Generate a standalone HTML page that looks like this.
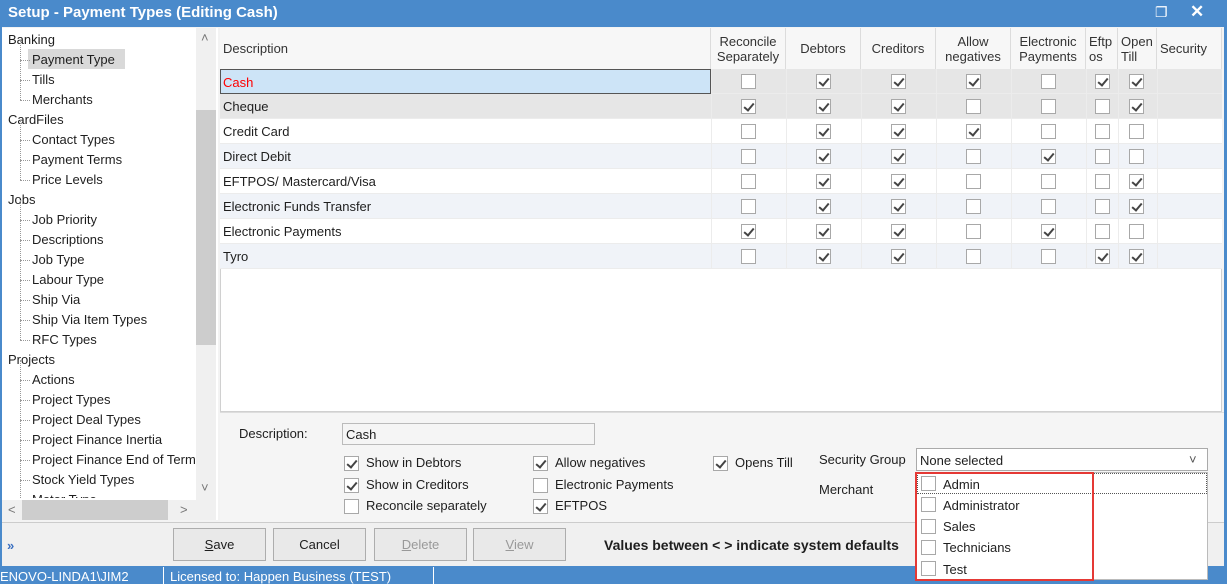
<!DOCTYPE html>
<html><head><meta charset="utf-8"><style>
*{box-sizing:border-box;margin:0;padding:0}
body{width:1227px;height:584px;overflow:hidden;background:#4a8acb;font-family:"Liberation Sans",sans-serif;font-size:13px;color:#1e1e1e;position:relative}
.a{position:absolute}
.t{position:absolute;white-space:nowrap}
.cb{position:absolute;width:15px;height:15px;border:1px solid #a8a8a8;background:#fff}
.cb.on::after{content:"";position:absolute;left:4px;top:1px;width:4px;height:8px;border:solid #444;border-width:0 2px 2px 0;transform:rotate(40deg)}
.hd{position:absolute;top:28px;height:41px;border-right:1px solid #dcdcdc;background:#f7f7f7;text-align:center;font-size:13px;line-height:15px;color:#333;display:flex;align-items:center;justify-content:center}
.row{position:absolute;left:220px;width:1002px;height:25px;border-bottom:1px solid #ececec}
.row span{position:absolute;left:3px;top:5px}
.vl{position:absolute;top:69px;height:200px;width:1px;background:#ececec}
.tr{position:absolute;left:0;font-size:13px;white-space:nowrap}
.btn{position:absolute;top:528px;height:33px;border:1px solid #adadad;background:#e9e9e9;text-align:center;line-height:31px;font-size:13px}
</style></head><body>
<div class="t" style="left:8px;top:4px;color:#fff;font-weight:bold;font-size:15px">Setup - Payment Types (Editing Cash)</div>
<div class="t" style="left:1155px;top:4px;color:#fff;font-size:14px">&#x2750;</div>
<div class="t" style="left:1190px;top:2px;color:#fff;font-size:17px;font-weight:bold">✕</div>
<div class="a" style="left:2px;top:27px;width:1222px;height:539px;background:#f3f3f3"></div>
<!-- tree -->
<div class="a" style="left:2px;top:28px;width:216px;height:492px;background:#fff;overflow:hidden">
<div class="a" style="left:194px;top:0;width:20px;height:472px;background:#f0f0f0"></div>
<div class="a" style="left:194px;top:82px;width:20px;height:235px;background:#cdcdcd"></div>
<div class="t" style="left:199px;top:2px;color:#777">&#x2c4;</div>
<div class="t" style="left:199px;top:452px;color:#777">&#x2c5;</div>
<div class="a" style="left:0;top:472px;width:214px;height:20px;background:#f0f0f0"></div>
<div class="a" style="left:20px;top:472px;width:146px;height:20px;background:#cdcdcd"></div>
<div class="t" style="left:6px;top:474px;color:#777">&lt;</div>
<div class="t" style="left:178px;top:474px;color:#777">&gt;</div>
<div class="a" style="left:26px;top:21px;width:97px;height:20px;background:#d9d9d9"></div>
<div style="position:absolute;left:6px;top:2px;line-height:20px;width:188px;height:468px;overflow:hidden" id="tree"></div>
</div>
<!-- grid -->
<div class="a" style="left:220px;top:28px;width:1002px;height:384px;background:#fff;border:1px solid #d0d0d0"></div>
<div class="hd" style="left:220px;width:491px;justify-content:flex-start;padding-left:3px">Description</div>
<div class="hd" style="left:711px;width:75px">Reconcile<br>Separately</div>
<div class="hd" style="left:786px;width:75px">Debtors</div>
<div class="hd" style="left:861px;width:75px">Creditors</div>
<div class="hd" style="left:936px;width:75px">Allow<br>negatives</div>
<div class="hd" style="left:1011px;width:75px">Electronic<br>Payments</div>
<div class="hd" style="left:1086px;width:32px;justify-content:flex-start;text-align:left;padding-left:3px">Eftp<br>os</div>
<div class="hd" style="left:1118px;width:39px;justify-content:flex-start;text-align:left;padding-left:3px">Open<br>Till</div>
<div class="hd" style="left:1157px;width:65px;justify-content:flex-start;padding-left:3px">Security</div>
<div class="row" style="top:69px;background:#e6e6e6"><span style="color:#f00">Cash</span></div>
<div class="a" style="left:220px;top:69px;width:491px;height:25px;background:#cde4f7;border:1px solid #555"><span class="t" style="left:2px;top:5px;color:#f00">Cash</span></div>
<div class="row" style="top:94px;background:#e6e6e6"><span>Cheque</span></div>
<div class="row" style="top:119px;background:#fff"><span>Credit Card</span></div>
<div class="row" style="top:144px;background:#f0f3f8"><span>Direct Debit</span></div>
<div class="row" style="top:169px;background:#fff"><span>EFTPOS/ Mastercard/Visa</span></div>
<div class="row" style="top:194px;background:#f0f3f8"><span>Electronic Funds Transfer</span></div>
<div class="row" style="top:219px;background:#fff"><span>Electronic Payments</span></div>
<div class="row" style="top:244px;background:#f0f3f8"><span>Tyro</span></div>
<div id="cbs"></div>
<!-- lower panel -->
<div class="a" style="left:220px;top:412px;width:1004px;height:110px;background:#f5f5f5;border-top:1px solid #ddd"></div>
<div class="t" style="left:239px;top:426px">Description:</div>
<div class="a" style="left:342px;top:423px;width:253px;height:22px;border:1px solid #bbb;background:#f5f5f5"><span class="t" style="left:3px;top:3px">Cash</span></div>
<div class="cb on" style="left:344px;top:456px"></div><div class="t" style="left:366px;top:455px">Show in Debtors</div>
<div class="cb on" style="left:344px;top:478px"></div><div class="t" style="left:366px;top:477px">Show in Creditors</div>
<div class="cb" style="left:344px;top:499px"></div><div class="t" style="left:366px;top:498px">Reconcile separately</div>
<div class="cb on" style="left:533px;top:456px"></div><div class="t" style="left:555px;top:455px">Allow negatives</div>
<div class="cb" style="left:533px;top:478px"></div><div class="t" style="left:555px;top:477px">Electronic Payments</div>
<div class="cb on" style="left:533px;top:499px"></div><div class="t" style="left:555px;top:498px">EFTPOS</div>
<div class="cb on" style="left:713px;top:456px"></div><div class="t" style="left:735px;top:455px">Opens Till</div>
<div class="t" style="left:819px;top:452px">Security Group</div>
<div class="t" style="left:819px;top:482px">Merchant</div>
<div class="a" style="left:916px;top:448px;width:292px;height:23px;border:1px solid #aaa;background:#fff"><span class="t" style="left:3px;top:4px">None selected</span><span class="t" style="left:272px;top:3px;color:#555">&#x2c5;</span></div>
<!-- buttons -->
<div class="a" style="left:2px;top:522px;width:1222px;height:44px;background:#f0f0f0;border-top:1px solid #ccc"></div>
<div class="t" style="left:7px;top:538px;color:#3a6fc0;font-weight:bold">»</div>
<div class="btn" style="left:173px;width:93px"><u>S</u>ave</div>
<div class="btn" style="left:273px;width:93px">Cancel</div>
<div class="btn" style="left:374px;width:93px;color:#999"><u>D</u>elete</div>
<div class="btn" style="left:473px;width:93px;color:#999"><u>V</u>iew</div>
<div class="t" style="left:604px;top:537px;font-weight:bold;font-size:14px">Values between &lt; &gt; indicate system defaults</div>
<!-- status -->
<div class="a" style="left:0;top:566px;width:1227px;height:18px;background:#4a8acb"></div>
<div class="t" style="left:0;top:569px;color:#fff;font-size:13px">ENOVO-LINDA1\JIM2</div>
<div class="a" style="left:163px;top:567px;width:1px;height:17px;background:#fff"></div>
<div class="t" style="left:170px;top:569px;color:#fff;font-size:13px">Licensed to: Happen Business (TEST)</div>
<div class="a" style="left:433px;top:567px;width:1px;height:17px;background:#fff"></div>
<!-- dropdown -->
<div class="a" style="left:916px;top:472px;width:292px;height:108px;background:#fff;border:1px solid #bbb"></div>
<div class="a" style="left:917px;top:473px;width:290px;height:21px;border:1px dotted #555"></div>
<div class="a" style="left:915px;top:472px;width:179px;height:109px;border:2px solid #e53935"></div>
<div class="cb" style="left:921px;top:476px"></div><div class="t" style="left:943px;top:477px">Admin</div>
<div class="cb" style="left:921px;top:497px"></div><div class="t" style="left:943px;top:498px">Administrator</div>
<div class="cb" style="left:921px;top:519px"></div><div class="t" style="left:943px;top:519px">Sales</div>
<div class="cb" style="left:921px;top:540px"></div><div class="t" style="left:943px;top:540px">Technicians</div>
<div class="cb" style="left:921px;top:561px"></div><div class="t" style="left:943px;top:562px">Test</div>
<script>
var items=[["Banking",0],["Payment Type",1],["Tills",1],["Merchants",1],["CardFiles",0],["Contact Types",1],["Payment Terms",1],["Price Levels",1],["Jobs",0],["Job Priority",1],["Descriptions",1],["Job Type",1],["Labour Type",1],["Ship Via",1],["Ship Via Item Types",1],["RFC Types",1],["Projects",0],["Actions",1],["Project Types",1],["Project Deal Types",1],["Project Finance Inertia",1],["Project Finance End of Term",1],["Stock Yield Types",1],["Motor Type",1]];
var h="";items.forEach(function(it,i){var y=i*20;if(it[1]){h+='<div class="a" style="left:12px;top:'+(y-10)+'px;width:1px;height:20px;border-left:1px dotted #999"></div><div class="a" style="left:12px;top:'+(y+10)+'px;width:10px;border-top:1px dotted #999"></div>';}h+='<div class="tr" style="top:'+y+'px;left:'+(it[1]?24:0)+'px">'+it[0]+'</div>';});
document.getElementById("tree").innerHTML=h;
var d=[[0,1,1,1,0,1,1],[1,1,1,0,0,0,1],[0,1,1,1,0,0,0],[0,1,1,0,1,0,0],[0,1,1,0,0,0,1],[0,1,1,0,0,0,1],[1,1,1,0,1,0,0],[0,1,1,0,0,1,1]];
var xs=[749,824,899,974,1049,1103,1137],c="";
[711,786,861,936,1011,1086,1118,1157].forEach(function(x){c+='<div class="vl" style="left:'+x+'px"></div>';});
d.forEach(function(r,i){r.forEach(function(v,j){c+='<div class="cb'+(v?' on':'')+'" style="left:'+(xs[j]-8)+'px;top:'+(74+i*25)+'px"></div>';});});
document.getElementById("cbs").innerHTML=c;
</script>
</body></html>
